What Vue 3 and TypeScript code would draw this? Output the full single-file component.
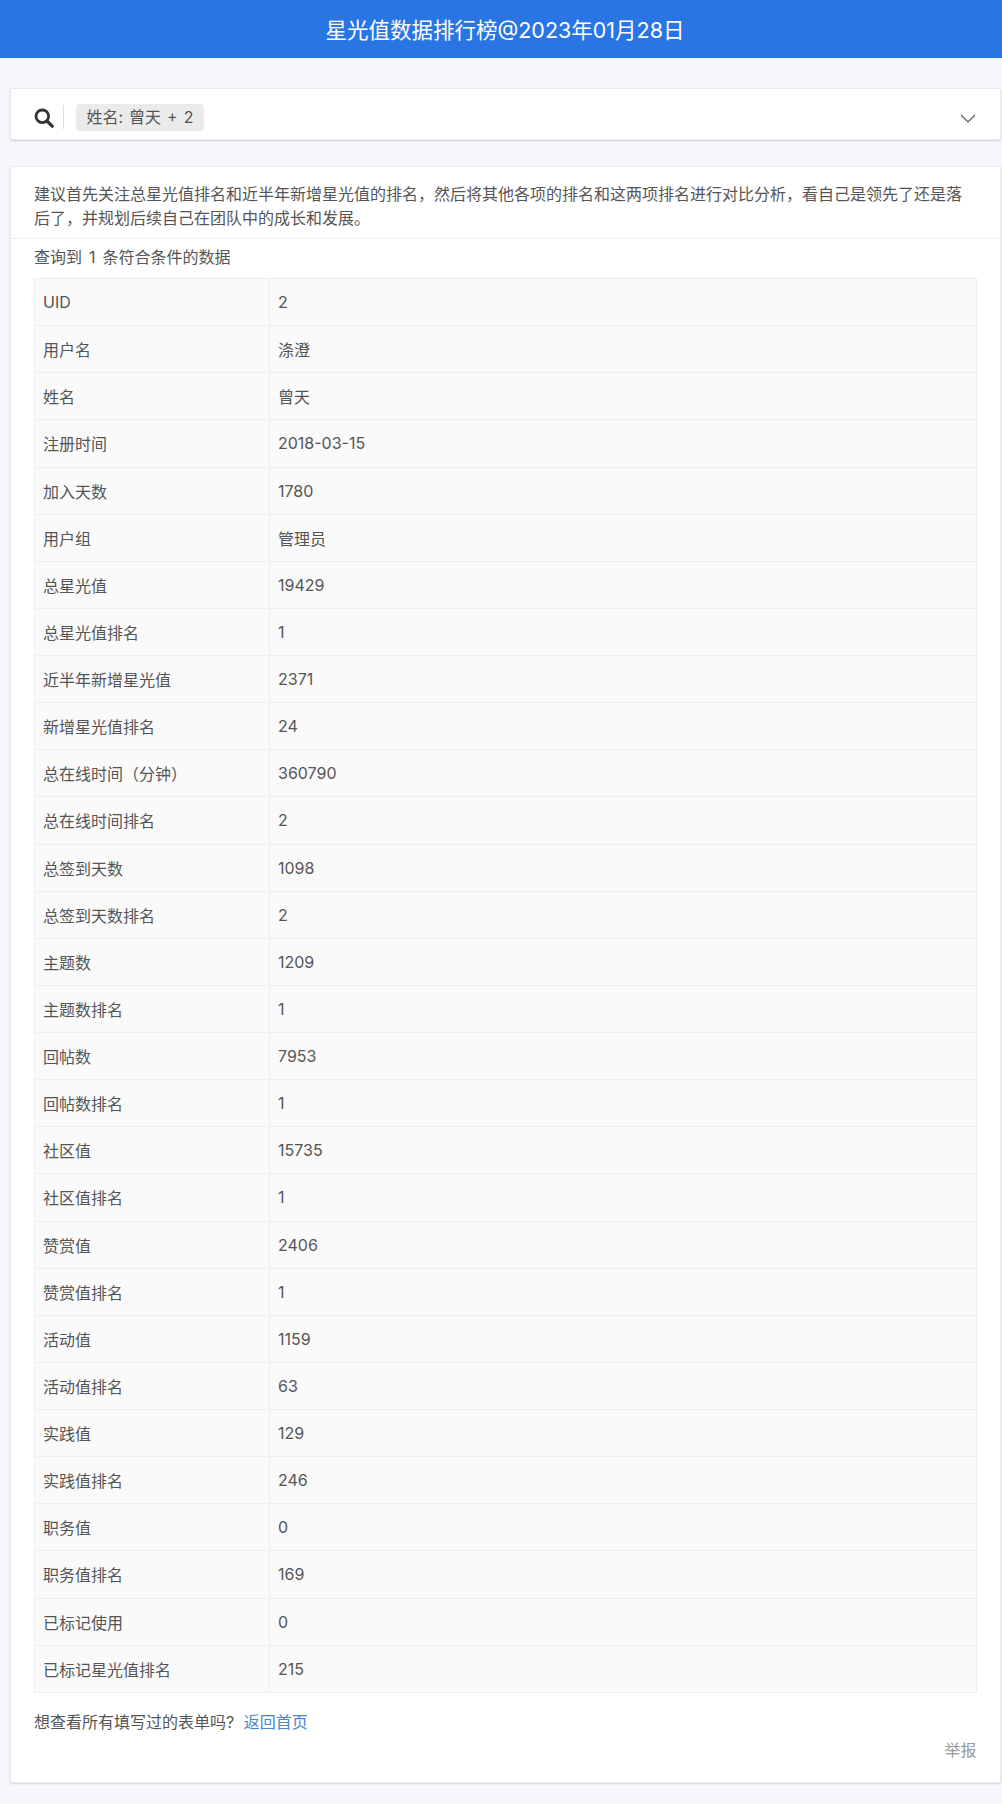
<script setup lang="ts">
const rows: [string, string][] = [
  ['UID', '2'], ['用户名', '涤澄'], ['姓名', '曾天'], ['注册时间', '2018-03-15'], ['加入天数', '1780'],
  ['用户组', '管理员'], ['总星光值', '19429'], ['总星光值排名', '1'], ['近半年新增星光值', '2371'],
  ['新增星光值排名', '24'], ['总在线时间（分钟）', '360790'], ['总在线时间排名', '2'], ['总签到天数', '1098'],
  ['总签到天数排名', '2'], ['主题数', '1209'], ['主题数排名', '1'], ['回帖数', '7953'], ['回帖数排名', '1'],
  ['社区值', '15735'], ['社区值排名', '1'], ['赞赏值', '2406'], ['赞赏值排名', '1'], ['活动值', '1159'],
  ['活动值排名', '63'], ['实践值', '129'], ['实践值排名', '246'], ['职务值', '0'], ['职务值排名', '169'],
  ['已标记使用', '0'], ['已标记星光值排名', '215'],
]
</script>

<template>
  <div class="page">
    <header class="top">星光值数据排行榜@2023年01月28日</header>
    <main class="content">
      <section class="search">
        <svg class="mag" viewBox="0 0 20 20" width="20" height="20" aria-hidden="true">
          <circle cx="8.3" cy="8.3" r="6.3" fill="none" stroke="#333" stroke-width="2.8" />
          <path d="M13 13l5.2 5.2" stroke="#333" stroke-width="3.2" stroke-linecap="round" />
        </svg>
        <span class="sep"></span>
        <span class="tag">姓名: 曾天 + 2</span>
        <svg class="chev" viewBox="0 0 16 9" width="16" height="9" aria-hidden="true">
          <path d="M1 1l7 7 7-7" fill="none" stroke="#555" stroke-width="1.2" />
        </svg>
      </section>
      <section class="card">
        <p class="intro">建议首先关注总星光值排名和近半年新增星光值的排名，然后将其他各项的排名和这两项排名进行对比分析，看自己是领先了还是落后了，并规划后续自己在团队中的成长和发展。</p>
        <div class="body">
          <p class="count">查询到 1 条符合条件的数据</p>
          <table class="data">
            <tbody>
              <tr v-for="r in rows" :key="r[0]">
                <td class="k">{{ r[0] }}</td>
                <td>{{ r[1] }}</td>
              </tr>
            </tbody>
          </table>
          <p class="back">想查看所有填写过的表单吗? <a class="link">返回首页</a></p>
          <div class="report">举报</div>
        </div>
      </section>
    </main>
  </div>
</template>

<style>
html, body { margin: 0; background: #f5f7fb; }
</style>

<style scoped>
.page {
  width: 1002px;
  height: 1804px;
  background: #f5f7fb;
  font-family: Inter, "Noto Sans CJK SC", sans-serif;
  font-size: 16px;
  color: #555;
  overflow: hidden;
}
.top {
  box-sizing: border-box;
  height: 58px;
  line-height: 60px;
  padding-left: 8px;
  text-align: center;
  font-size: 21.5px;
  color: #fff;
  background: #2a75e4;
}
.content {
  padding: 30px 1px 0 9.5px;
  display: flex;
  flex-direction: column;
  gap: 26px;
}
.search, .card {
  background: #fff;
  border: 1px solid #e8eaed;
  box-shadow: 0 1px 2px rgba(0, 0, 0, 0.15);
  border-radius: 2px;
  box-sizing: border-box;
}
.search {
  height: 52px;
  display: flex;
  align-items: center;
  padding: 6px 24px 0 23.5px;
}
.mag { flex: none; margin-top: 1px; }
.sep {
  width: 1px;
  height: 24px;
  background: #ddd;
  margin: 0 12px 0 9px;
}
.tag {
  height: 27px;
  line-height: 26px;
  padding: 0 10.5px;
  background: #ebebeb;
  border-radius: 4px;
  color: #555;
  white-space: nowrap;
  word-spacing: 1.5px;
}
.chev { margin-left: auto; margin-top: 2px; }
.card { height: 1617px; }
.intro {
  margin: 0;
  padding: 15px 23.5px 8px;
  line-height: 24px;
  border-bottom: 1px solid #eceef1;
}
.body { padding: 0 23.5px; }
.count {
  margin: 0;
  height: 39px;
  line-height: 36px;
  word-spacing: 2.5px;
}
.data {
  width: 943px;
  table-layout: fixed;
  border-collapse: collapse;
  background: #fafafa;
}
.data td {
  height: 47.13px;
  padding: 0 8px;
  box-sizing: border-box;
  border: 1px solid #edeff2;
}
.data .k { width: 235px; }
.back {
  margin: 0;
  height: 46px;
  line-height: 58px;
}
.link { color: #4a86c8; margin-left: 5px; }
.report {
  text-align: right;
  color: #999;
  line-height: 22px;
}
</style>
